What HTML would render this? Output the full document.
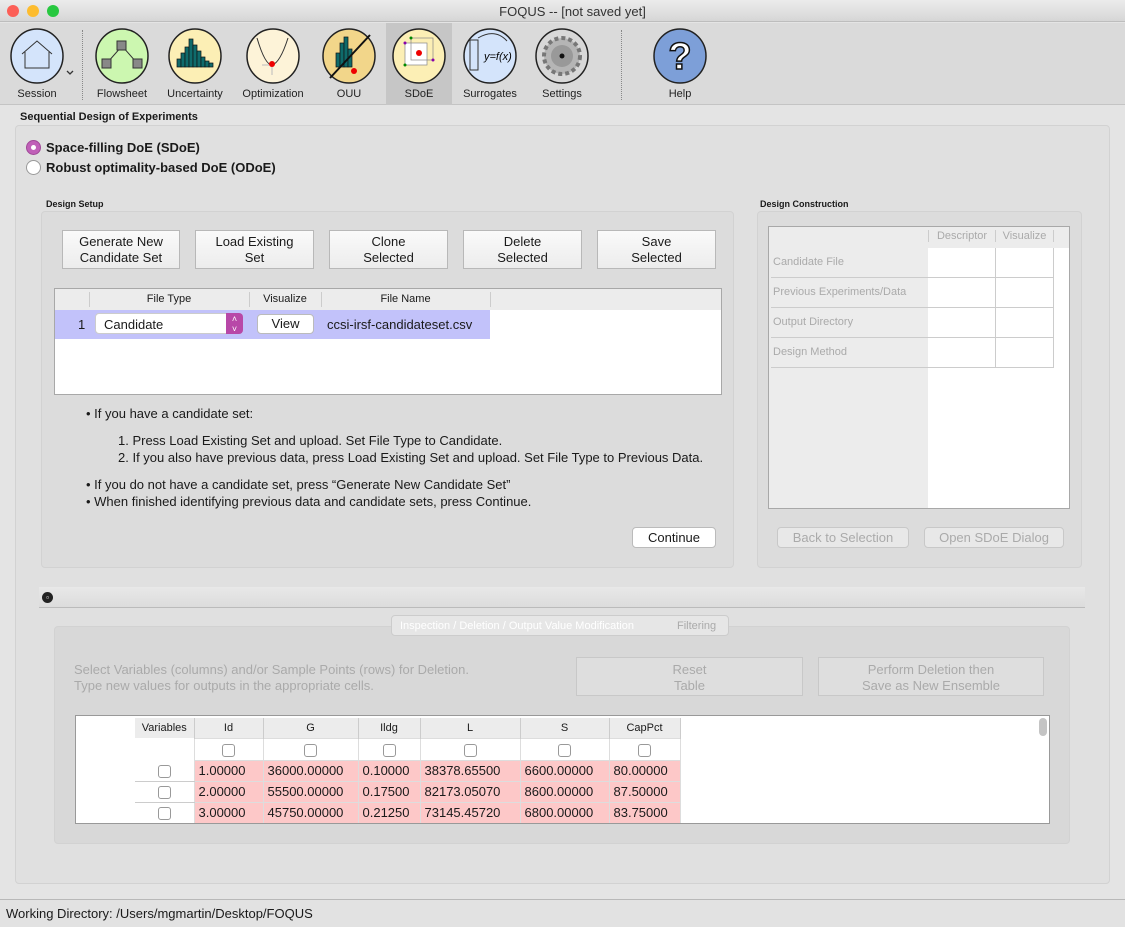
<!DOCTYPE html>
<html><head><meta charset="utf-8"><style>
*{box-sizing:border-box;margin:0;padding:0}
body{width:1125px;height:927px;position:relative;overflow:hidden;background:#e4e4e4;font-family:"Liberation Sans",sans-serif;font-size:13px;color:#1a1a1a}
.a{position:absolute}
.btn{position:absolute;background:linear-gradient(#fafafa,#ececec);border:1px solid #b8b8b8;text-align:center;font-size:13px;line-height:16px;display:flex;align-items:center;justify-content:center}
.dbtn{position:absolute;border:1px solid #c8c8c8;border-radius:4px;background:#e8e8e8;color:#aaa;text-align:center;font-size:13px;line-height:19px}
.lbl{position:absolute;font-size:11px;color:#222;text-align:center;width:80px}
.grp{position:absolute;background:#dcdcdc;border:1px solid #d2d2d2;border-radius:4px}
.b{font-weight:bold}
table{border-collapse:collapse}
.cb{display:inline-block;width:13px;height:13px;border:1px solid #999;border-radius:3px;background:#fff;vertical-align:middle}
</style></head><body>
<div class="a" style="left:0;top:0;width:1125px;height:22px;background:linear-gradient(#ececec,#d6d6d6);border-bottom:1px solid #bdbdbd"></div>
<div class="a" style="left:7px;top:5px;width:12px;height:12px;border-radius:6px;background:#fc5f57"></div>
<div class="a" style="left:27px;top:5px;width:12px;height:12px;border-radius:6px;background:#fdbc2e"></div>
<div class="a" style="left:47px;top:5px;width:12px;height:12px;border-radius:6px;background:#28c840"></div>
<div class="a" style="left:0;top:4px;width:1125px;text-align:center;font-size:13px;color:#333;padding-left:20px">FOQUS -- [not saved yet]</div>
<div class="a" style="left:0;top:23px;width:1125px;height:82px;background:#dadada;border-bottom:1px solid #c4c4c4"></div>
<div class="a" style="left:386px;top:23px;width:66px;height:82px;background:#c6c6c6"></div>
<div class="a" style="left:82px;top:30px;height:70px;border-left:1px dotted #888"></div>
<div class="a" style="left:621px;top:30px;height:70px;border-left:1px dotted #888"></div>
<svg class="a" style="left:0;top:23px" width="720" height="65">
<g stroke="#222" stroke-width="1.5">
<ellipse cx="37" cy="33" rx="26" ry="27" fill="#d4e4fb"/>
<ellipse cx="122" cy="33" rx="26" ry="27" fill="#ccf7b0"/>
<ellipse cx="195" cy="33" rx="26" ry="27" fill="#fcefb5"/>
<ellipse cx="273" cy="33" rx="26" ry="27" fill="#fdf3d8"/>
<ellipse cx="349" cy="33" rx="26" ry="27" fill="#f2d68a"/>
<ellipse cx="419" cy="33" rx="26" ry="27" fill="#fcefb5"/>
<ellipse cx="490" cy="33" rx="26" ry="27" fill="#d4e4fb"/>
<ellipse cx="562" cy="33" rx="26" ry="27" fill="#d8d8d8"/>
<ellipse cx="680" cy="33" rx="26" ry="27" fill="#7d9fd8"/>
</g>
<path d="M22 31 L37 18 L52 31 M25 29 V45 H49 V29" stroke="#333" fill="none" stroke-width="1"/>
<path d="M67 48 l3 3 l3-3" stroke="#333" fill="none" stroke-width="1.3"/>
<path d="M107 40 L122 23 L137 40" stroke="#333" fill="none"/>
<rect x="117" y="18" width="9" height="9" fill="#888" stroke="#333"/><rect x="102" y="36" width="9" height="9" fill="#888" stroke="#333"/><rect x="133" y="36" width="9" height="9" fill="#888" stroke="#333"/>
<g fill="#0f6b6b" stroke="#111" stroke-width=".7"><rect x="177" y="36" width="4" height="8"/><rect x="181" y="30" width="4" height="14"/><rect x="185" y="24" width="4" height="20"/><rect x="189" y="16" width="4" height="28"/><rect x="193" y="22" width="4" height="22"/><rect x="197" y="28" width="4" height="16"/><rect x="201" y="34" width="4" height="10"/><rect x="205" y="38" width="4" height="6"/><rect x="209" y="40" width="4" height="4"/></g>
<path d="M257 15 Q265 42 272 42 Q280 40 288 15" stroke="#333" fill="none"/><path d="M262 42 H272 V52" stroke="#bbb" fill="none"/><circle cx="272" cy="41" r="3" fill="#e00"/>
<g fill="#0f6b6b" stroke="#111" stroke-width=".7"><rect x="336" y="30" width="4" height="14"/><rect x="340" y="20" width="4" height="24"/><rect x="344" y="14" width="4" height="30"/><rect x="348" y="26" width="4" height="18"/></g>
<path d="M330 55 L370 12" stroke="#111" stroke-width="2"/><circle cx="354" cy="48" r="3" fill="#e00"/>
<rect x="405" y="20" width="22" height="22" fill="#fff" stroke="#888" stroke-width=".7"/><rect x="411" y="15" width="22" height="22" fill="none" stroke="#888" stroke-width=".7"/><circle cx="419" cy="30" r="3" fill="#e00"/><circle cx="411" cy="15" r="1.5" fill="#080"/><circle cx="405" cy="42" r="1.5" fill="#080"/><circle cx="433" cy="37" r="1.5" fill="#80a"/><circle cx="405" cy="20" r="1.5" fill="#80a"/>
<rect x="470" y="17" width="8" height="30" fill="none" stroke="#333"/><text x="484" y="37" font-size="11" font-style="italic" font-family="Liberation Sans">y=f(x)</text><path d="M478 15 Q495 5 507 18" stroke="#333" fill="none"/>
<circle cx="562" cy="33" r="18" fill="#b5b5b5" stroke="#777" stroke-dasharray="4 3" stroke-width="4"/><circle cx="562" cy="33" r="11" fill="#999"/><circle cx="562" cy="33" r="2.5" fill="#111"/>
<text x="680" y="46" font-size="38" text-anchor="middle" fill="#fff" stroke="#111" stroke-width="1.5" font-family="Liberation Sans" font-weight="bold">?</text>
</svg>
<div class="lbl" style="left:-3px;top:88px">Session</div>
<div class="lbl" style="left:82px;top:88px">Flowsheet</div>
<div class="lbl" style="left:155px;top:88px">Uncertainty</div>
<div class="lbl" style="left:233px;top:88px">Optimization</div>
<div class="lbl" style="left:309px;top:88px">OUU</div>
<div class="lbl" style="left:379px;top:88px">SDoE</div>
<div class="lbl" style="left:450px;top:88px">Surrogates</div>
<div class="lbl" style="left:522px;top:88px">Settings</div>
<div class="lbl" style="left:640px;top:88px">Help</div>

<div class="a b" style="left:20px;top:111px;font-size:11px">Sequential Design of Experiments</div>
<div class="grp" style="left:15px;top:125px;width:1095px;height:759px;background:#e0e0e0"></div>
<div class="a" style="left:26px;top:140px;width:15px;height:15px;border-radius:8px;background:#c060b8;border:1px solid #a04898"><div style="margin:4px;width:5px;height:5px;border-radius:3px;background:#fff"></div></div>
<div class="a b" style="left:46px;top:140px">Space-filling DoE (SDoE)</div>
<div class="a" style="left:26px;top:160px;width:15px;height:15px;border-radius:8px;background:#fff;border:1px solid #999"></div>
<div class="a b" style="left:46px;top:160px">Robust optimality-based DoE (ODoE)</div>

<div class="a b" style="left:46px;top:199px;font-size:9px">Design Setup</div>
<div class="grp" style="left:41px;top:211px;width:693px;height:357px"></div>
<div class="btn" style="left:62px;top:230px;width:118px;height:39px">Generate New<br>Candidate Set</div>
<div class="btn" style="left:195px;top:230px;width:119px;height:39px">Load Existing<br>Set</div>
<div class="btn" style="left:329px;top:230px;width:119px;height:39px">Clone<br>Selected</div>
<div class="btn" style="left:463px;top:230px;width:119px;height:39px">Delete<br>Selected</div>
<div class="btn" style="left:597px;top:230px;width:119px;height:39px">Save<br>Selected</div>
<div class="a" style="left:54px;top:288px;width:668px;height:107px;background:#fff;border:1px solid #a8a8a8"></div>
<div class="a" style="left:55px;top:289px;width:666px;height:21px;background:#ececec"></div>
<div class="a" style="left:55px;top:310px;width:435px;height:29px;background:#c2c2fa"></div>
<div class="a" style="left:89px;top:292px;height:15px;border-left:1px solid #ccc"></div>
<div class="a" style="left:249px;top:292px;height:15px;border-left:1px solid #ccc"></div>
<div class="a" style="left:321px;top:292px;height:15px;border-left:1px solid #ccc"></div>
<div class="a" style="left:490px;top:292px;height:15px;border-left:1px solid #ccc"></div>
<div class="a" style="left:89px;top:293px;width:160px;text-align:center;font-size:11px">File Type</div>
<div class="a" style="left:249px;top:293px;width:72px;text-align:center;font-size:11px">Visualize</div>
<div class="a" style="left:321px;top:293px;width:169px;text-align:center;font-size:11px">File Name</div>
<div class="a" style="left:78px;top:317px">1</div>
<div class="a" style="left:95px;top:313px;width:148px;height:21px;background:#fff;border:1px solid #ccc;border-radius:4px;padding:3px 8px">Candidate</div>
<div class="a" style="left:226px;top:313px;width:17px;height:21px;background:#b848a8;border-radius:0 4px 4px 0;color:#fff;font-size:9px;text-align:center;line-height:10px;padding-top:1px">˄<br>˅</div>
<div class="a" style="left:257px;top:314px;width:57px;height:20px;background:#fff;border:1px solid #bbb;border-radius:4px;text-align:center;line-height:18px">View</div>
<div class="a" style="left:327px;top:317px">ccsi-irsf-candidateset.csv</div>
<div class="a" style="left:86px;top:406px">• If you have a candidate set:</div>
<div class="a" style="left:118px;top:433px">1. Press Load Existing Set and upload. Set File Type to Candidate.</div>
<div class="a" style="left:118px;top:450px">2. If you also have previous data, press Load Existing Set and upload. Set File Type to Previous Data.</div>
<div class="a" style="left:86px;top:477px">• If you do not have a candidate set, press “Generate New Candidate Set”</div>
<div class="a" style="left:86px;top:494px">• When finished identifying previous data and candidate sets, press Continue.</div>
<div class="a" style="left:632px;top:527px;width:84px;height:21px;background:#fff;border:1px solid #bbb;border-radius:4px;text-align:center;line-height:19px">Continue</div>

<div class="a b" style="left:760px;top:199px;font-size:9px">Design Construction</div>
<div class="grp" style="left:757px;top:211px;width:325px;height:357px"></div>
<div class="a" style="left:768px;top:226px;width:302px;height:283px;background:#fff;border:1px solid #a8a8a8"></div>
<div class="a" style="left:769px;top:227px;width:159px;height:281px;background:#ececec"></div>
<div class="a" style="left:928px;top:227px;width:141px;height:21px;background:#ececec"></div>
<div class="a" style="left:928px;top:230px;width:68px;text-align:center;color:#aaa;font-size:11px;border-left:1px solid #ccc;border-right:1px solid #ccc">Descriptor</div>
<div class="a" style="left:996px;top:230px;width:58px;text-align:center;color:#aaa;font-size:11px;border-right:1px solid #ccc">Visualize</div>
<div class="a" style="left:928px;top:248px;width:126px;height:120px;border-right:1px solid #ccc"></div>
<div class="a" style="left:995px;top:248px;height:120px;border-left:1px solid #ccc"></div>
<div class="a" style="left:771px;top:277px;width:283px;border-top:1px solid #ccc"></div>
<div class="a" style="left:771px;top:307px;width:283px;border-top:1px solid #ccc"></div>
<div class="a" style="left:771px;top:337px;width:283px;border-top:1px solid #ccc"></div>
<div class="a" style="left:771px;top:367px;width:283px;border-top:1px solid #ccc"></div>
<div class="a" style="left:773px;top:256px;color:#aaa;font-size:11px">Candidate File</div>
<div class="a" style="left:773px;top:286px;color:#aaa;font-size:11px">Previous Experiments/Data</div>
<div class="a" style="left:773px;top:316px;color:#aaa;font-size:11px">Output Directory</div>
<div class="a" style="left:773px;top:346px;color:#aaa;font-size:11px">Design Method</div>
<div class="dbtn" style="left:777px;top:527px;width:132px;height:21px">Back to Selection</div>
<div class="dbtn" style="left:924px;top:527px;width:140px;height:21px">Open SDoE Dialog</div>

<div class="a" style="left:39px;top:587px;width:1046px;height:21px;background:linear-gradient(#e8e8e8,#dcdcdc);border-bottom:1px solid #bbb"></div>
<div class="a" style="left:42px;top:592px;width:11px;height:11px;border-radius:6px;background:#222;color:#fff;font-size:8px;line-height:11px;text-align:center">▫</div>
<div class="grp" style="left:54px;top:626px;width:1016px;height:218px;background:#d8d8d8"></div>
<div class="a" style="left:391px;top:615px;width:338px;height:21px;border:1px solid #ccc;border-radius:4px;background:#e6e6e6"></div>
<div class="a" style="left:400px;top:620px;font-size:11px;color:#fff">Inspection / Deletion / Output Value Modification</div>
<div class="a" style="left:677px;top:620px;font-size:11px;color:#aaa">Filtering</div>
<div class="a" style="left:74px;top:662px;color:#aaa">Select Variables (columns) and/or Sample Points (rows) for Deletion.</div>
<div class="a" style="left:74px;top:678px;color:#aaa">Type new values for outputs in the appropriate cells.</div>
<div class="a" style="left:576px;top:657px;width:227px;height:39px;border:1px solid #c8c8c8;background:#dedede;color:#aaa;text-align:center;padding-top:4px;line-height:16px">Reset<br>Table</div>
<div class="a" style="left:818px;top:657px;width:226px;height:39px;border:1px solid #c8c8c8;background:#dedede;color:#aaa;text-align:center;padding-top:4px;line-height:16px">Perform Deletion then<br>Save as New Ensemble</div>
<div class="a" style="left:75px;top:715px;width:975px;height:109px;background:#fff;border:1px solid #999;overflow:hidden">
<div class="a" style="left:963px;top:2px;width:8px;height:18px;border-radius:4px;background:#c4c4c4"></div>
<table class="a" style="left:59px;top:2px;font-size:13px">
<tr style="background:#ececec;height:20px;font-size:11px;text-align:center"><td style="width:59px;border-right:1px solid #ccc">Variables</td><td style="width:69px;border-right:1px solid #ccc">Id</td><td style="width:95px;border-right:1px solid #ccc">G</td><td style="width:62px;border-right:1px solid #ccc">Ildg</td><td style="width:100px;border-right:1px solid #ccc">L</td><td style="width:89px;border-right:1px solid #ccc">S</td><td style="width:71px;border-right:1px solid #ccc">CapPct</td></tr>
<tr style="height:22px;text-align:center"><td></td><td style="border:1px solid #ddd"><span class="cb"></span></td><td style="border:1px solid #ddd"><span class="cb"></span></td><td style="border:1px solid #ddd"><span class="cb"></span></td><td style="border:1px solid #ddd"><span class="cb"></span></td><td style="border:1px solid #ddd"><span class="cb"></span></td><td style="border:1px solid #ddd"><span class="cb"></span></td></tr>
<tr style="height:21px"><td style="text-align:center;border-bottom:1px solid #ccc"><span class="cb"></span></td><td style="background:#fdc8c8;border:1px solid #ddd;padding-left:4px">1.00000</td><td style="background:#fdc8c8;border:1px solid #ddd;padding-left:4px">36000.00000</td><td style="background:#fdc8c8;border:1px solid #ddd;padding-left:4px">0.10000</td><td style="background:#fdc8c8;border:1px solid #ddd;padding-left:4px">38378.65500</td><td style="background:#fdc8c8;border:1px solid #ddd;padding-left:4px">6600.00000</td><td style="background:#fdc8c8;border:1px solid #ddd;padding-left:4px">80.00000</td></tr>
<tr style="height:21px"><td style="text-align:center;border-bottom:1px solid #ccc"><span class="cb"></span></td><td style="background:#fdc8c8;border:1px solid #ddd;padding-left:4px">2.00000</td><td style="background:#fdc8c8;border:1px solid #ddd;padding-left:4px">55500.00000</td><td style="background:#fdc8c8;border:1px solid #ddd;padding-left:4px">0.17500</td><td style="background:#fdc8c8;border:1px solid #ddd;padding-left:4px">82173.05070</td><td style="background:#fdc8c8;border:1px solid #ddd;padding-left:4px">8600.00000</td><td style="background:#fdc8c8;border:1px solid #ddd;padding-left:4px">87.50000</td></tr>
<tr style="height:21px"><td style="text-align:center;border-bottom:1px solid #ccc"><span class="cb"></span></td><td style="background:#fdc8c8;border:1px solid #ddd;padding-left:4px">3.00000</td><td style="background:#fdc8c8;border:1px solid #ddd;padding-left:4px">45750.00000</td><td style="background:#fdc8c8;border:1px solid #ddd;padding-left:4px">0.21250</td><td style="background:#fdc8c8;border:1px solid #ddd;padding-left:4px">73145.45720</td><td style="background:#fdc8c8;border:1px solid #ddd;padding-left:4px">6800.00000</td><td style="background:#fdc8c8;border:1px solid #ddd;padding-left:4px">83.75000</td></tr>
<tr style="height:21px"><td></td><td style="background:#fdc8c8"></td><td style="background:#fdc8c8"></td><td style="background:#fdc8c8"></td><td style="background:#fdc8c8"></td><td style="background:#fdc8c8"></td><td style="background:#fdc8c8"></td></tr>
</table></div>

<div class="a" style="left:0;top:899px;width:1125px;height:28px;background:#e2e2e2;border-top:1px solid #b8b8b8"></div>
<div class="a" style="left:6px;top:906px">Working Directory: /Users/mgmartin/Desktop/FOQUS</div>
</body></html>
